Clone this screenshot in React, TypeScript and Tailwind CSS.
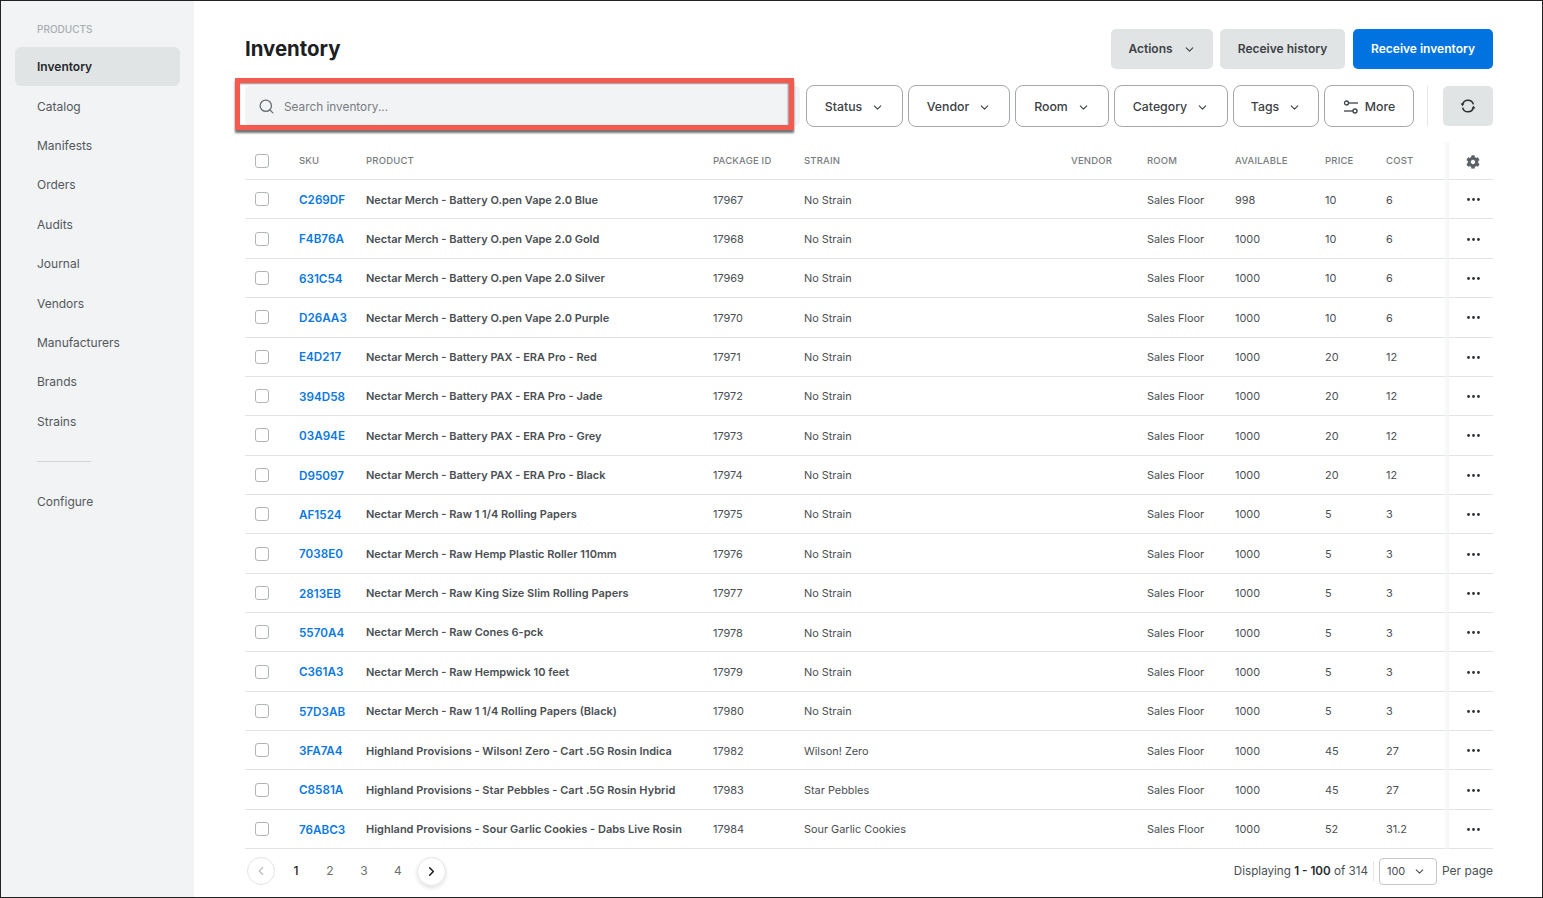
import React from "react";
import { ChevronDown, ChevronLeft, ChevronRight, Search, MoreHorizontal } from "lucide-react";
import { FaCog } from "react-icons/fa";

const rows: string[][] = [
  ["C269DF","Nectar Merch - Battery O.pen Vape 2.0 Blue","17967","No Strain","998","10","6"],
  ["F4B76A","Nectar Merch - Battery O.pen Vape 2.0 Gold","17968","No Strain","1000","10","6"],
  ["631C54","Nectar Merch - Battery O.pen Vape 2.0 Silver","17969","No Strain","1000","10","6"],
  ["D26AA3","Nectar Merch - Battery O.pen Vape 2.0 Purple","17970","No Strain","1000","10","6"],
  ["E4D217","Nectar Merch - Battery PAX - ERA Pro - Red","17971","No Strain","1000","20","12"],
  ["394D58","Nectar Merch - Battery PAX - ERA Pro - Jade","17972","No Strain","1000","20","12"],
  ["03A94E","Nectar Merch - Battery PAX - ERA Pro - Grey","17973","No Strain","1000","20","12"],
  ["D95097","Nectar Merch - Battery PAX - ERA Pro - Black","17974","No Strain","1000","20","12"],
  ["AF1524","Nectar Merch - Raw 1 1/4 Rolling Papers","17975","No Strain","1000","5","3"],
  ["7038E0","Nectar Merch - Raw Hemp Plastic Roller 110mm","17976","No Strain","1000","5","3"],
  ["2813EB","Nectar Merch - Raw King Size Slim Rolling Papers","17977","No Strain","1000","5","3"],
  ["5570A4","Nectar Merch - Raw Cones 6-pck","17978","No Strain","1000","5","3"],
  ["C361A3","Nectar Merch - Raw Hempwick 10 feet","17979","No Strain","1000","5","3"],
  ["57D3AB","Nectar Merch - Raw 1 1/4 Rolling Papers (Black)","17980","No Strain","1000","5","3"],
  ["3FA7A4","Highland Provisions - Wilson! Zero - Cart .5G Rosin Indica","17982","Wilson! Zero","1000","45","27"],
  ["C8581A","Highland Provisions - Star Pebbles - Cart .5G Rosin Hybrid","17983","Star Pebbles","1000","45","27"],
  ["76ABC3","Highland Provisions - Sour Garlic Cookies - Dabs Live Rosin","17984","Sour Garlic Cookies","1000","52","31.2"],
];

const nav = ["Catalog","Manifests","Orders","Audits","Journal","Vendors","Manufacturers","Brands","Strains"];

function Check() {
  return <span className="block w-[14px] h-[14px] rounded-[3px] border border-[#b0b5b8] bg-white" />;
}

function Filter({ label, w }: { label: string; w: string }) {
  return (
    <button className={`${w} h-[42px] pt-[2px] flex items-center justify-center gap-[9px] rounded-[8px] border border-[#a3a8ab] bg-white text-[12.3px] font-medium text-[#3c4145]`}>
      {label}
      <ChevronDown size={13} strokeWidth={2} className="text-[#3c4145]" />
    </button>
  );
}

export default function App() {
  return (
    <div className="w-[1543px] h-[898px] overflow-hidden relative flex border border-[#222] bg-white text-[#4a4f53] font-['Inter','Liberation_Sans',sans-serif] text-[10.9px]">
      <aside className="w-[193px] shrink-0 bg-[#f1f3f5] pt-[20px] pl-[14px] pr-[14px]">
        <div className="pl-[22px] h-[16px] leading-[16px] text-[10px] font-medium text-[#a9aeb2]">PRODUCTS</div>
        <div className="mt-[10px] mb-[1px] h-[39px] rounded-[6px] bg-[#e1e4e5] pl-[22px] flex items-center text-[12px] font-semibold text-[#25292c]">Inventory</div>
        {nav.map((n) => (
          <div key={n} className="h-[39.4px] pl-[22px] flex items-center text-[12px] text-[#53585c]">{n}</div>
        ))}
        <div className="ml-[22px] w-[54px] mt-[19px] border-t border-[#d3d6d9]" />
        <div className="h-[39px] mt-[21px] pl-[22px] flex items-center text-[12px] text-[#53585c]">Configure</div>
      </aside>

      <main className="flex-1 min-w-0 pl-[51px] pr-[49px] pt-[28px]">
        <div className="h-[40px] flex items-center justify-between">
          <h1 className="text-[20.4px] font-bold text-[#1d2023]">Inventory</h1>
          <div className="flex gap-[7px] text-[12px] font-semibold">
            <button className="w-[102px] h-[40px] rounded-[5px] bg-[#e1e4e5] text-[#3c4145] flex items-center justify-center gap-[10px]">Actions <ChevronDown size={13} strokeWidth={2} /></button>
            <button className="w-[125px] h-[40px] rounded-[5px] bg-[#e1e4e5] text-[#3c4145]">Receive history</button>
            <button className="ml-[1px] w-[140px] h-[40px] rounded-[5px] bg-[#0073e0] text-white">Receive inventory</button>
          </div>
        </div>

        <div className="mt-[16px] flex items-center h-[42px]">
          <div className="w-[555px] h-[40px] shrink-0 bg-[#f1f3f5] rounded-[5px] flex items-center pl-[13px] gap-[9px] text-[11.8px] text-[#777c80]">
            <Search size={17} strokeWidth={1.8} className="text-[#666b6f]" />
            <span className="pt-[4px]">Search inventory...</span>
          </div>
          <div className="ml-[6px] flex gap-[5px]">
            <Filter label="Status" w="w-[97px]" />
            <Filter label="Vendor" w="w-[102px]" />
            <Filter label="Room" w="w-[94px]" />
            <Filter label="Category" w="w-[114px]" />
            <Filter label="Tags" w="w-[86px]" />
            <button className="w-[90px] h-[42px] pt-[2px] flex items-center justify-center gap-[6px] rounded-[8px] border border-[#a3a8ab] text-[12.3px] font-medium text-[#3c4145]">
              <svg width="16" height="14" viewBox="0 0 16 14" fill="none" stroke="#3c4145" strokeWidth="1.3">
                <circle cx="3.5" cy="3" r="2" />
                <path d="M5.5 3H15" />
                <circle cx="12" cy="11" r="2" />
                <path d="M1 11h9" />
              </svg>
              More
            </button>
          </div>
          <div className="ml-[13px] w-px h-[40px] bg-[#e4e6e8]" />
          <button className="ml-[15px] w-[50px] h-[40px] rounded-[5px] bg-[#e1e4e5] flex items-center justify-center text-[#2b2f32]">
            <svg width="16" height="16" viewBox="0 0 16 16" fill="none" stroke="currentColor" strokeWidth="1.5">
              <path d="M2.6 6.2A5.6 5.6 0 0 1 13.4 6.4" />
              <path d="M13.4 9.8A5.6 5.6 0 0 1 2.6 9.6" />
              <path d="M0.6 5.4L4.4 5.4L2.5 8.2Z" fill="currentColor" stroke="none" />
              <path d="M11.6 10.6L15.4 10.6L13.5 7.8Z" fill="currentColor" stroke="none" />
            </svg>
          </button>
        </div>

        <div className="mt-[15px] relative">
          <div className="h-[38.1px] pt-[2px] flex items-center border-b border-[#e1e4e5] text-[9.5px] font-medium text-[#777c80] tracking-[0.2px]">
            <div className="w-[54px] pl-[10px] mt-[-2px]"><Check /></div>
            <div className="w-[67px]">SKU</div>
            <div className="w-[347px]">PRODUCT</div>
            <div className="w-[91px]">PACKAGE ID</div>
            <div className="w-[267px]">STRAIN</div>
            <div className="w-[76px]">VENDOR</div>
            <div className="w-[88px]">ROOM</div>
            <div className="w-[90px]">AVAILABLE</div>
            <div className="w-[61px]">PRICE</div>
            <div className="w-[63px]">COST</div>
            <div className="flex-1 flex justify-center pl-[4px] text-[#5b6166]"><FaCog size={14} /></div>
          </div>
          {rows.map((r) => (
            <div key={r[0]} className="h-[39.37px] pt-[1px] flex items-center border-b border-[#e1e4e5]">
              <div className="w-[54px] pl-[10px] mt-[-1px]"><Check /></div>
              <div className="w-[67px] pt-[2px] text-[11.7px] font-semibold text-[#0a78e2]">{r[0]}</div>
              <div className="w-[347px] text-[11px] font-semibold text-[#4a4f53] whitespace-nowrap">{r[1]}</div>
              <div className="w-[91px]">{r[2]}</div>
              <div className="w-[267px]">{r[3]}</div>
              <div className="w-[76px]" />
              <div className="w-[88px]">Sales Floor</div>
              <div className="w-[90px]">{r[4]}</div>
              <div className="w-[61px]">{r[5]}</div>
              <div className="w-[63px]">{r[6]}</div>
              <div className="flex-1 flex justify-center pl-[4px] text-[#2b2f32]"><MoreHorizontal size={17} strokeWidth={2} /></div>
            </div>
          ))}
          <div className="absolute right-[44px] top-0 bottom-0 w-[6px] bg-gradient-to-l from-[#f3f4f5] to-transparent" />
        </div>

        <div className="h-[44px] flex items-center justify-between">
          <div className="flex items-center text-[12px] text-[#6b7074] pl-[2px]">
            <span className="w-[28px] h-[28px] rounded-full border border-[#e1e4e5] flex items-center justify-center text-[#b9bdc0]"><ChevronLeft size={14} /></span>
            <span className="w-[34px] ml-[4px] text-center font-medium text-[#1d2023]">1</span>
            <span className="w-[34px] text-center">2</span>
            <span className="w-[34px] text-center">3</span>
            <span className="w-[34px] text-center">4</span>
            <span className="ml-[2px] w-[29px] h-[29px] rounded-full border border-[#e1e4e5] shadow-[0_2px_4px_rgba(0,0,0,0.12)] flex items-center justify-center text-[#1d2023]"><ChevronRight size={15} strokeWidth={2.5} /></span>
          </div>
          <div className="flex items-center text-[12px] text-[#4a4f53]">
            <span className="text-[11.65px] pt-[1px]">Displaying <b className="font-semibold text-[#25292c]">1 - 100</b> of 314</span>
            <span className="ml-[5px] w-px h-[20px] bg-[#e4e6e8]" />
            <span className="ml-[5px] w-[58px] h-[27px] rounded-[4px] border border-[#c4c7ca] flex items-center pl-[7px] gap-[8px] text-[11px]">100 <ChevronDown size={13} /></span>
            <span className="ml-[5px]">Per page</span>
          </div>
        </div>
      </main>

      <div className="absolute left-[234px] top-[77px] w-[559px] h-[52px] border-[5px] border-[#f55a4e] shadow-[0_3px_2px_rgba(0,0,0,0.55),inset_-1px_1px_2px_rgba(0,0,0,0.45)]" />
    </div>
  );
}
